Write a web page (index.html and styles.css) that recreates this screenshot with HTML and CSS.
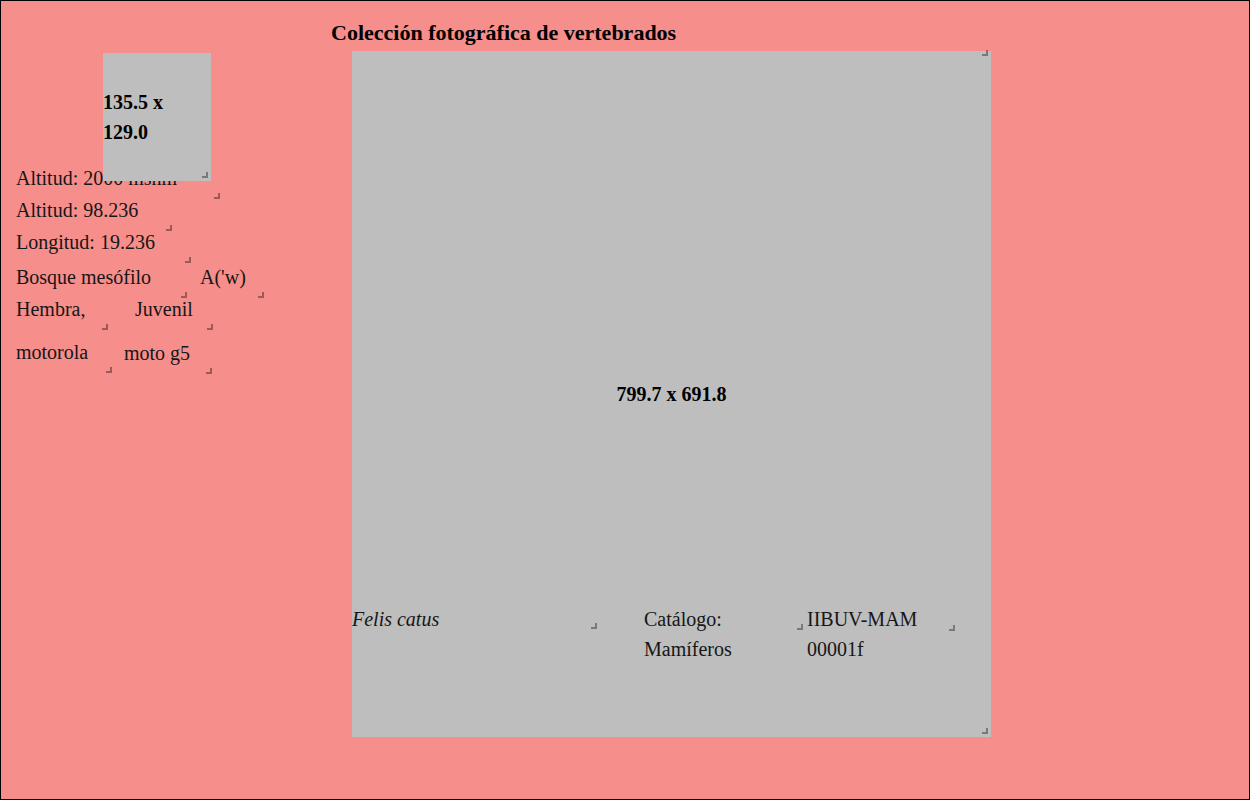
FILE: index.html
```html
<!DOCTYPE html>
<html lang="es">
<head>
<meta charset="utf-8">
<title>Colección fotográfica de vertebrados</title>
<link rel="stylesheet" href="styles.css">
</head>
<body>
<div class="frame">
  <aside class="sidebar">
    <div class="thumb">
      <div class="thumb-label">135.5 x 129.0</div>
      <span class="handle"></span>
    </div>
    <div class="meta">
      <div class="row">
        <div class="item w-alt1">Altitud: 2000 msnm<span class="handle"></span></div>
      </div>
      <div class="row">
        <div class="item w-alt2">Altitud: 98.236<span class="handle"></span></div>
      </div>
      <div class="row">
        <div class="item w-lon">Longitud: 19.236<span class="handle"></span></div>
      </div>
      <div class="row gap-10">
        <div class="item w-veg">Bosque mesófilo<span class="handle"></span></div>
        <div class="item w-clim">A('w)<span class="handle"></span></div>
      </div>
      <div class="row gap-24">
        <div class="item w-sex">Hembra,<span class="handle"></span></div>
        <div class="item w-age">Juvenil<span class="handle"></span></div>
      </div>
      <div class="row gap-9">
        <div class="item w-brand">motorola<span class="handle"></span></div>
        <div class="item w-model item-low">moto g5<span class="handle"></span></div>
      </div>
    </div>
  </aside>
  <main class="main">
    <h1 class="title">Colección fotográfica de vertebrados</h1>
    <div class="photo">
      <span class="handle handle-top"></span>
      <div class="photo-label">799.7 x 691.8</div>
      <div class="caption">
        <div class="cap-item cap-species"><em>Felis catus</em><span class="handle"></span></div>
        <div class="cap-item cap-catalog">Catálogo: Mamíferos<span class="handle"></span></div>
        <div class="cap-item cap-code">IIBUV-MAM 00001f<span class="handle"></span></div>
      </div>
      <span class="handle"></span>
    </div>
  </main>
</div>
</body>
</html>
```

FILE: styles.css
```css
html, body {
  margin: 0;
  padding: 0;
}

body {
  font-family: "Liberation Serif", "Times New Roman", serif;
  color: #161616;
}

.frame {
  position: relative;
  box-sizing: border-box;
  width: 1250px;
  height: 800px;
  border: 1px solid #000;
  background: #f68e8c;
  display: flex;
  overflow: hidden;
}

.handle {
  position: absolute;
  right: 3px;
  bottom: 3px;
  box-sizing: border-box;
  width: 6px;
  height: 6px;
  border-right: 2px solid rgba(0, 0, 0, 0.36);
  border-bottom: 2px solid rgba(0, 0, 0, 0.36);
  pointer-events: none;
}

/* Sidebar */
.sidebar {
  width: 330px;
  flex: none;
  box-sizing: border-box;
  padding: 166px 0 0 15px;
}

.thumb {
  position: absolute;
  left: 102px;
  top: 52px;
  z-index: 2;
  width: 108px;
  height: 128px;
  background: #bebebe;
  display: flex;
  align-items: center;
}

.thumb-label {
  font-weight: bold;
  font-size: 20px;
  line-height: 30px;
  color: #000;
}

.meta {
  display: grid;
  grid-template-rows: 32px 32px 35px 32px 43px 36px;
  font-size: 20px;
  line-height: 23px;
}

.row {
  display: flex;
  align-items: flex-start;
}

.gap-10 { gap: 10px; }
.gap-24 { gap: 24px; }
.gap-9 { gap: 9px; }

.item {
  position: relative;
  height: 35px;
  flex: none;
  white-space: nowrap;
}

.item-low { margin-top: 1px; }

.w-alt1 { width: 207px; }
.w-alt2 { width: 159px; }
.w-lon { width: 178px; }
.w-veg { width: 174px; }
.w-clim { width: 67px; }
.w-sex { width: 95px; }
.w-age { width: 81px; }
.w-brand { width: 99px; }
.w-model { width: 91px; }

/* Main */
.main {
  flex: 1;
  display: flex;
  flex-direction: column;
}

.title {
  margin: 19px 0 0 0;
  font-size: 22px;
  line-height: 25px;
  font-weight: bold;
  color: #000;
}

.photo {
  position: relative;
  margin: 6px 0 0 21px;
  width: 639px;
  height: 686px;
  background: #bebebe;
  display: grid;
}

.handle-top {
  top: -1px;
  bottom: auto;
}

.photo-label {
  grid-area: 1 / 1;
  place-self: center;
  font-weight: bold;
  font-size: 20px;
  line-height: 23px;
  color: #000;
}

.caption {
  grid-area: 1 / 1;
  align-self: start;
  margin-top: 553px;
  display: flex;
  font-size: 20px;
  line-height: 30px;
}

.cap-item {
  position: relative;
  height: 29px;
  flex: none;
}

.cap-species { width: 248px; height: 28px; margin-right: 44px; }
.cap-catalog { width: 162px; }
.cap-code { width: 151px; height: 30px; margin-left: 1px; }
```
